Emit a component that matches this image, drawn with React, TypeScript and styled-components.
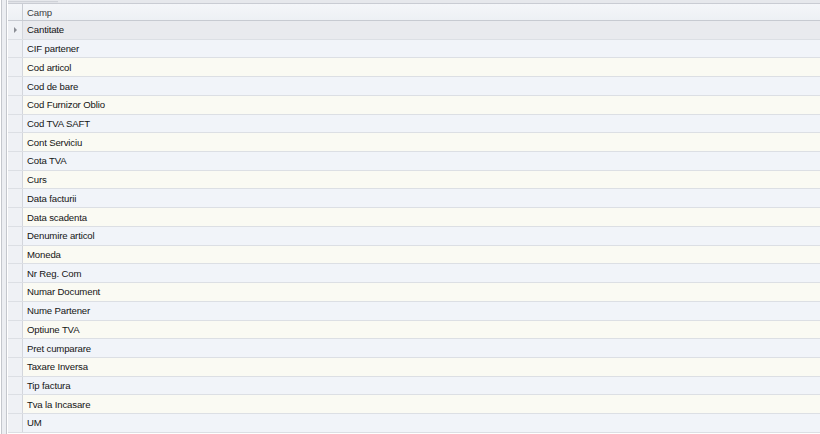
import React from "react";
import styled, { createGlobalStyle } from "styled-components";

const GlobalStyle = createGlobalStyle`
  html, body {
    margin: 0;
    padding: 0;
    background: #ffffff;
  }
  body {
    font-family: "Liberation Sans", Arial, sans-serif;
  }
`;

const fields = [
  "Cantitate",
  "CIF partener",
  "Cod articol",
  "Cod de bare",
  "Cod Furnizor Oblio",
  "Cod TVA SAFT",
  "Cont Serviciu",
  "Cota TVA",
  "Curs",
  "Data facturii",
  "Data scadenta",
  "Denumire articol",
  "Moneda",
  "Nr Reg. Com",
  "Numar Document",
  "Nume Partener",
  "Optiune TVA",
  "Pret cumparare",
  "Taxare Inversa",
  "Tip factura",
  "Tva la Incasare",
  "UM",
];

// rows fill the space below the header: 412px / 22 rows
const ROW_HEIGHT = 412 / 22;

const Frame = styled.div`
  display: flex;
  width: 820px;
  height: 434px;
  overflow: hidden;
  background: #ffffff;
`;

const SideRail = styled.div`
  width: 4px;
  margin-left: 1px;
  margin-right: 1px;
  border-left: 1px solid #c4c7cd;
  border-right: 1px solid #c4c7cd;
  background: #eceef2;
`;

const Grid = styled.div`
  flex: 1;
  display: flex;
  flex-direction: column;
`;

const TopBand = styled.div`
  display: flex;
  height: 3px;
  border-bottom: 1px solid #c9ccd3;
  background: #e6e8ec;
`;

const TopThumb = styled.div`
  width: 50px;
  margin-top: 1px;
  border-top: 1px solid #cfd2d8;
  background: #e1e3e8;
`;

const HeaderRow = styled.div`
  display: flex;
  height: 16px;
  border-bottom: 1px solid #c7cad1;
  background: linear-gradient(#f4f6f9, #edf0f4);
`;

const Row = styled.div<{ $tone: "focus" | "even" | "odd" }>`
  display: flex;
  box-sizing: border-box;
  height: ${ROW_HEIGHT}px;
  border-bottom: 1px solid #dcdfe4;
  background: ${(p) =>
    p.$tone === "focus" ? "#e9eaee" : p.$tone === "odd" ? "#f1f4f9" : "#fafaf3"};
`;

const Indicator = styled.div`
  position: relative;
  width: 14px;
  flex: none;
  border-right: 1px solid #d3d6dc;
  background: #eff1f5;
`;

const HeaderIndicator = styled(Indicator)`
  background: transparent;
  border-right-color: #c9ccd3;
`;

const Arrow = styled.span`
  position: absolute;
  left: 6px;
  top: 50%;
  margin-top: -3px;
  width: 0;
  height: 0;
  border-top: 3px solid transparent;
  border-bottom: 3px solid transparent;
  border-left: 3px solid #8b8e95;
`;

const Cell = styled.div<{ $header?: boolean }>`
  flex: 1;
  display: flex;
  align-items: center;
  padding-left: 4px;
  font-size: 9.6px;
  letter-spacing: -0.15px;
  color: ${(p) => (p.$header ? "#3a3c41" : "#141414")};
  white-space: nowrap;
`;

export default function App() {
  return (
    <>
      <GlobalStyle />
      <Frame>
        <SideRail />
        <Grid>
          <TopBand>
            <TopThumb />
          </TopBand>
          <HeaderRow>
            <HeaderIndicator />
            <Cell $header>Camp</Cell>
          </HeaderRow>
          {fields.map((name, i) => (
            <Row key={name} $tone={i === 0 ? "focus" : i % 2 === 1 ? "odd" : "even"}>
              <Indicator>{i === 0 && <Arrow />}</Indicator>
              <Cell>{name}</Cell>
            </Row>
          ))}
        </Grid>
      </Frame>
    </>
  );
}
